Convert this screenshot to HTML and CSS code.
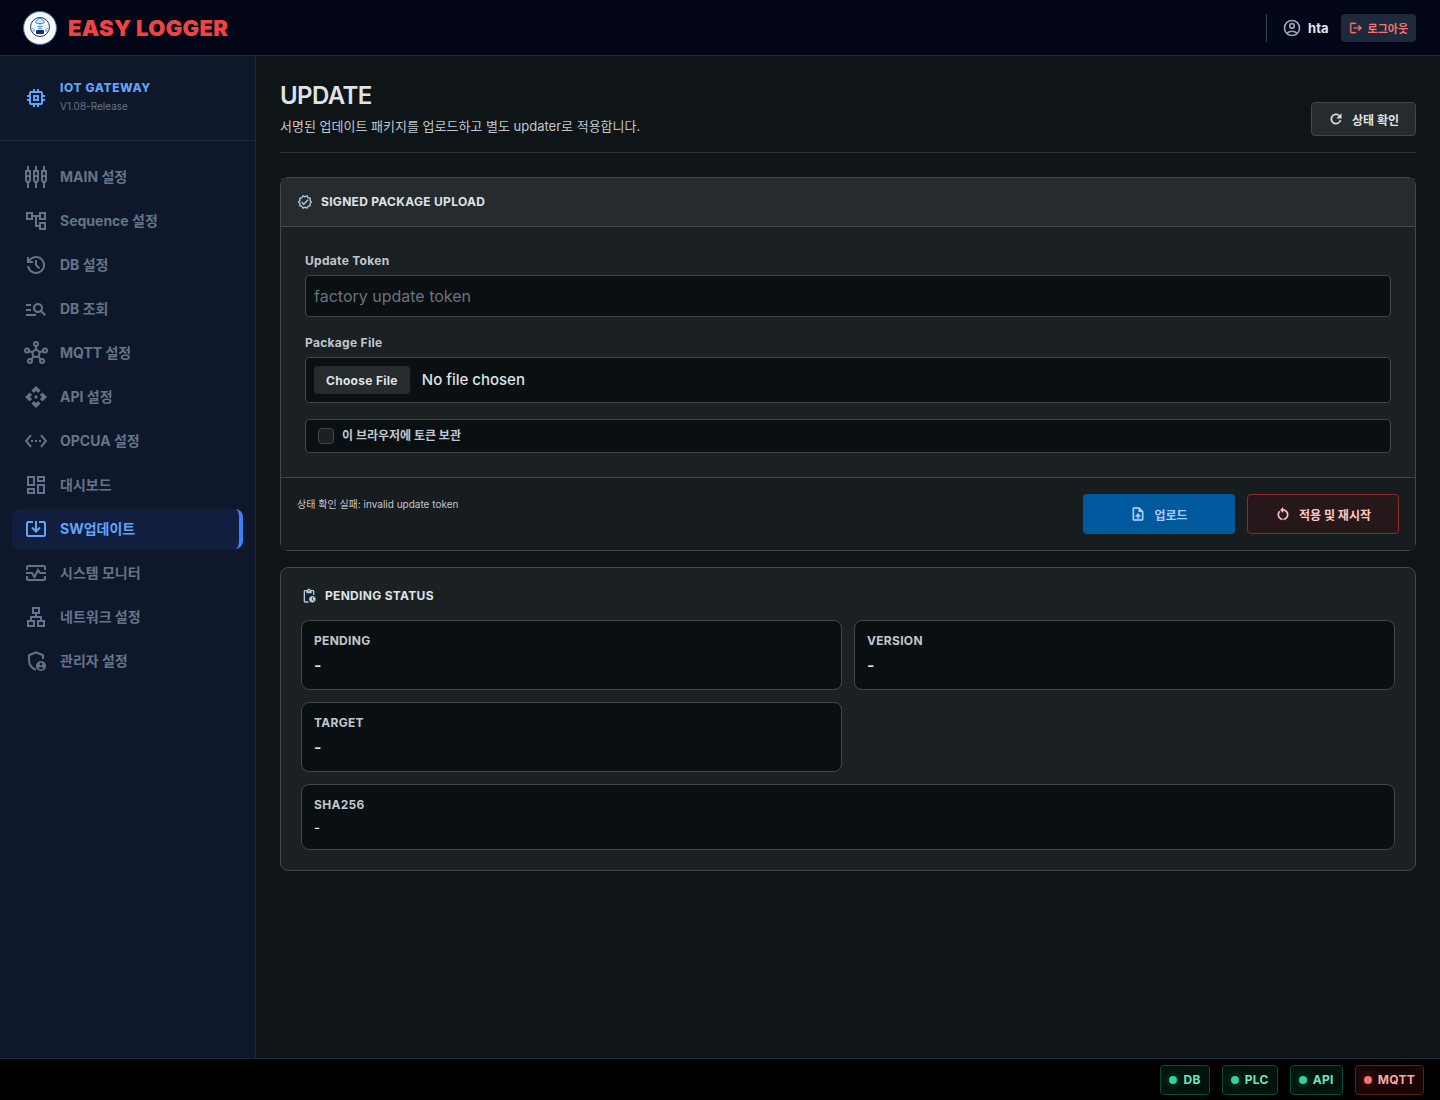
FILE: index.html
```html
<!DOCTYPE html>
<html lang="ko">
<head>
    <meta charset="UTF-8">
    <meta name="viewport" content="width=device-width, initial-scale=1.0">
    <title>EASY LOGGER - UPDATE</title>
    <link rel="stylesheet" href="styles.css">
</head>
<body>

<header class="topbar">
    <div class="brand">
        <svg class="brand-logo" viewBox="0 0 34 34" aria-hidden="true">
            <circle cx="17" cy="17" r="16.5" fill="#f8fafc" stroke="#3b6ea8"/>
            <circle cx="17" cy="16" r="9.5" fill="none" stroke="#1e3a5f"/>
            <path d="M14.5 12.5h5a1.7 1.7 0 0 0 0-3.4 2.6 2.6 0 0 0-5 0 1.7 1.7 0 0 0 0 3.4z" fill="#dbeafe" stroke="#3b82f6"/>
            <path d="M14 15.5h6M15 17.5h4M17 13v6M9 17l3 2M25 17l-3 2M9 20h3M22 20h3" fill="none" stroke="#60a5fa"/>
            <rect x="13" y="19" width="8" height="4" rx="1" fill="#16304f"/>
        </svg>
        <span class="brand-name">EASY LOGGER</span>
    </div>
    <div class="user-area">
        <svg class="icon icon-20 line" viewBox="0 0 24 24"><circle cx="12" cy="12" r="9"/><circle cx="12" cy="9.5" r="2.7"/><path d="M5.8 18.2c3.6-3 8.8-3 12.4 0"/></svg>
        <span class="user-name">hta</span>
        <button type="button" class="logout">
            <svg class="icon icon-14" viewBox="0 0 24 24"><path d="M17 7l-1.41 1.41L18.17 11H8v2h10.17l-2.58 2.58L17 17l5-5zM4 5h8V3H4c-1.1 0-2 .9-2 2v14c0 1.1.9 2 2 2h8v-2H4V5z"/></svg>
            로그아웃
        </button>
    </div>
</header>

<div class="layout">
    <aside class="sidebar">
        <div class="gateway">
            <svg class="icon" viewBox="0 0 24 24"><path d="M9 15V9h6v6zm2-2h2v-2h-2zm-2 8v-2H7q-.825 0-1.412-.587T5 17v-2H3v-2h2v-2H3V9h2V7q0-.825.588-1.412T7 5h2V3h2v2h2V3h2v2h2q.825 0 1.413.588T19 7v2h2v2h-2v2h2v2h-2v2q0 .825-.587 1.413T17 19h-2v2h-2v-2h-2v2zm8-4V7H7v10z"/></svg>
            <div class="gateway-text">
                <div class="gateway-name">IOT GATEWAY</div>
                <div class="gateway-version">V1.08-Release</div>
            </div>
        </div>
        <nav class="menu">
            <a href="#main">
                <svg class="icon line" viewBox="0 0 24 24"><path d="M4 1v5M4 18v5M12 1v5M12 18v5M20 1v5M20 18v5M2 6h4v9l-1 2H3l-1-2zM10 6h4v9l-1 2h-2l-1-2zM18 6h4v9l-1 2h-2l-1-2zM2 11h4M10 11h4M18 11h4"/></svg>
                MAIN 설정
            </a>
            <a href="#sequence">
                <svg class="icon" viewBox="0 0 24 24"><path d="M22 11V3h-7v3H9V3H2v8h7V8h2v10h4v3h7v-8h-7v3h-2V8h2v3h7zM7 9H4V5h3v4zm10 6h3v4h-3v-4zm0-10h3v4h-3V5z"/></svg>
                Sequence 설정
            </a>
            <a href="#db">
                <svg class="icon" viewBox="0 0 24 24"><path d="M12 21q-3.45 0-6.012-2.287T3.05 13H5.1q.35 2.6 2.313 4.3T12 19q2.925 0 4.963-2.037T19 12t-2.037-4.962T12 5q-1.725 0-3.225.8T6.25 8H9v2H3V4h2v2.35q1.275-1.6 3.113-2.475T12 3q1.875 0 3.513.713t2.85 1.924t1.925 2.85T21 12t-.712 3.513t-1.925 2.85t-2.85 1.925T12 21m2.8-4.8L11 12.4V7h2v4.6l3.2 3.2z"/></svg>
                DB 설정
            </a>
            <a href="#db-search">
                <svg class="icon" viewBox="0 0 24 24"><path d="M7 9H2V7h5v2zm0 3H2v2h5v-2zm13.59 7l-3.83-3.83c-.8.52-1.74.83-2.76.83-2.76 0-5-2.24-5-5s2.24-5 5-5 5 2.24 5 5c0 1.02-.31 1.96-.83 2.75L22 17.59 20.59 19zM17 11c0-1.65-1.35-3-3-3s-3 1.35-3 3 1.35 3 3 3 3-1.35 3-3zM2 19h10v-2H2v2z"/></svg>
                DB 조회
            </a>
            <a href="#mqtt">
                <svg class="icon line" viewBox="0 0 24 24"><circle cx="12" cy="12.5" r="3.5"/><circle cx="12" cy="3" r="2"/><circle cx="3" cy="9.5" r="2"/><circle cx="21" cy="9.5" r="2"/><circle cx="6" cy="20" r="2"/><circle cx="18" cy="20" r="2"/><path d="M12 5v4M5 10l3.6 1.4M19 10l-3.6 1.4M7.3 18.3l2.4-3M16.7 18.3l-2.4-3"/></svg>
                MQTT 설정
            </a>
            <a href="#api">
                <svg class="icon" viewBox="0 0 24 24"><path d="M14 12l-2 2-2-2 2-2 2 2zm-2-6l2.12 2.12 2.5-2.5L12 1 7.38 5.62l2.5 2.5L12 6zm-6 6l2.12-2.12-2.5-2.5L1 12l4.62 4.62 2.5-2.5L6 12zm12 0l-2.12 2.12 2.5 2.5L23 12l-4.62-4.62-2.5 2.5L18 12zm-6 6l-2.12-2.12-2.5 2.5L12 23l4.62-4.62-2.5-2.5L12 18z"/></svg>
                API 설정
            </a>
            <a href="#opcua">
                <svg class="icon" viewBox="0 0 24 24"><path d="M7.77 6.76L6.23 5.48.82 12l5.41 6.52 1.54-1.28L3.42 12l4.35-5.24zM7 13h2v-2H7v2zm10-2h-2v2h2v-2zm-6 2h2v-2h-2v2zm6.77-7.52l-1.54 1.28L20.58 12l-4.35 5.24 1.54 1.28L23.18 12l-5.41-6.52z"/></svg>
                OPCUA 설정
            </a>
            <a href="#dashboard">
                <svg class="icon" viewBox="0 0 24 24"><path d="M19 5v2h-4V5h4M9 5v6H5V5h4m10 8v6h-4v-6h4M9 17v2H5v-2h4M21 3h-8v6h8V3zM11 3H3v10h8V3zm10 8h-8v10h8V11zm-10 4H3v6h8v-6z"/></svg>
                대시보드
            </a>
            <a href="#update" class="active">
                <svg class="icon line" viewBox="0 0 24 24"><path d="M9 5H4l-1 1v12l1 1h16l1-1V6l-1-1h-5M12 4v10M8 10.5l4 4 4-4"/></svg>
                SW업데이트
            </a>
            <a href="#monitor">
                <svg class="icon line" viewBox="0 0 24 24"><path d="M3 9V6l1-1h16l1 1v3M3 15v3l1 1h16l1-1v-3M2 12h6l2.5 4 3.5-7 2 3h6"/></svg>
                시스템 모니터
            </a>
            <a href="#network">
                <svg class="icon" viewBox="0 0 24 24"><path d="M13 22h8v-7h-3v-4h-5V9h3V2H8v7h3v2H6v4H3v7h8v-7H8v-2h8v2h-3v7zM10 7V4h4v3h-4zM9 17v3H5v-3h4zm10 0v3h-4v-3h4z"/></svg>
                네트워크 설정
            </a>
            <a href="#admin">
                <svg class="icon" viewBox="0 0 24 24"><path class="outline" d="M19 10V6.2L12 3.4 5 6.2V11c0 4.6 2.8 8.2 6.8 9.8"/><path fill-rule="evenodd" d="M17 12a5 5 0 1 0 0 10 5 5 0 0 0 0-10zm0 1.8a1.4 1.4 0 1 1 0 2.8 1.4 1.4 0 0 1 0-2.8zm0 6.4c-1.1 0-2-.5-2.6-1.3 1.4-1.1 3.8-1.1 5.2 0-.6.8-1.5 1.3-2.6 1.3z"/></svg>
                관리자 설정
            </a>
        </nav>
    </aside>

    <main class="content">
        <div class="page-head">
            <div>
                <h1>UPDATE</h1>
                <p>서명된 업데이트 패키지를 업로드하고 별도 updater로 적용합니다.</p>
            </div>
            <button type="button" class="btn btn-check">
                <svg class="icon icon-16" viewBox="0 0 24 24"><path d="M17.65 6.35C16.2 4.9 14.21 4 12 4c-4.42 0-7.99 3.58-7.99 8s3.57 8 7.99 8c3.73 0 6.84-2.55 7.73-6h-2.08c-.82 2.33-3.04 4-5.65 4-3.31 0-6-2.69-6-6s2.69-6 6-6c1.66 0 3.14.69 4.22 1.78L13 11h7V4l-2.35 2.35z"/></svg>
                상태 확인
            </button>
        </div>

        <form class="card upload-card" id="uploadForm">
            <div class="card-head">
                <svg class="icon icon-16" viewBox="0 0 24 24"><path d="M23 11.99l-2.44-2.79.34-3.69-3.61-.82L15.4 1.5 12 2.96 8.6 1.5 6.71 4.69 3.1 5.5l.34 3.7L1 11.99l2.44 2.79-.34 3.7 3.61.82 1.89 3.2 3.4-1.47 3.4 1.46 1.89-3.19 3.61-.82-.34-3.69L23 11.99zm-3.95 1.48l-.56.65.08.85.18 1.95-1.9.43-.84.19-.44.74-.99 1.68-1.78-.77-.8-.34-.79.34-1.78.77-.99-1.67-.44-.74-.84-.19-1.9-.43.18-1.96.08-.85-.56-.65L3.67 12l1.29-1.48.56-.65-.09-.86-.18-1.94 1.9-.43.84-.19.44-.74.99-1.68 1.78.77.8.34.79-.34 1.78-.77.99 1.68.44.74.84.19 1.9.43-.18 1.95-.08.85.56.65 1.29 1.47-1.28 1.48zM10.09 13.75l-2.32-2.33-1.48 1.49 3.8 3.81 7.34-7.36-1.48-1.49z"/></svg>
                <h2>SIGNED PACKAGE UPLOAD</h2>
            </div>
            <div class="card-body">
                <div class="field">
                    <label for="updateToken">Update Token</label>
                    <input type="text" id="updateToken" placeholder="factory update token">
                </div>
                <div class="field">
                    <label for="packageFile">Package File</label>
                    <input type="file" id="packageFile">
                </div>
                <label class="remember" for="rememberToken">
                    <input type="checkbox" id="rememberToken">
                    이 브라우저에 토큰 보관
                </label>
            </div>
            <div class="card-foot">
                <p id="statusMessage">상태 확인 실패: invalid update token</p>
                <div class="actions">
                    <button type="submit" class="btn btn-upload">
                        <svg class="icon icon-16" viewBox="0 0 24 24"><path d="M14 2H6c-1.1 0-1.99.9-1.99 2L4 20c0 1.1.89 2 1.99 2H18c1.1 0 2-.9 2-2V8l-6-6zm4 18H6V4h7v5h5v11zM8 15.01l1.41 1.41L11 14.84V19h2v-4.16l1.59 1.59L16 15.01 12.01 11 8 15.01z"/></svg>
                        업로드
                    </button>
                    <button type="button" class="btn btn-apply">
                        <svg class="icon icon-16" viewBox="0 0 24 24"><path d="M12 5V2L8 6l4 4V7c3.31 0 6 2.69 6 6 0 2.97-2.17 5.43-5 5.91v2.02c3.95-.49 7-3.85 7-7.93 0-4.42-3.58-8-8-8zm-6 8c0-1.65.67-3.15 1.76-4.24L6.34 7.34C4.9 8.79 4 10.79 4 13c0 4.08 3.05 7.44 7 7.93v-2.02c-2.83-.48-5-2.94-5-5.91z"/></svg>
                        적용 및 재시작
                    </button>
                </div>
            </div>
        </form>

        <section class="card status-card">
            <div class="status-head">
                <svg class="icon icon-16" viewBox="0 0 24 24"><path d="M17 12c-2.76 0-5 2.24-5 5s2.24 5 5 5 5-2.24 5-5-2.24-5-5-5zm1.65 7.35L16.5 17.2V14h1v2.79l1.85 1.85-.7.71zM18 3h-3.18C14.4 1.84 13.3 1 12 1s-2.4.84-2.82 2H6c-1.1 0-2 .9-2 2v15c0 1.1.9 2 2 2h6.11c-.59-.57-1.07-1.25-1.42-2H6V5h2v3h8V5h2v5.08c.71.1 1.38.31 2 .6V5c0-1.1-.9-2-2-2zm-6 2c-.55 0-1-.45-1-1s.45-1 1-1 1 .45 1 1-.45 1-1 1z"/></svg>
                <h2>PENDING STATUS</h2>
            </div>
            <dl class="status-grid">
                <div class="stat"><dt>PENDING</dt><dd>-</dd></div>
                <div class="stat"><dt>VERSION</dt><dd>-</dd></div>
                <div class="stat"><dt>TARGET</dt><dd>-</dd></div>
                <div class="stat stat-wide"><dt>SHA256</dt><dd>-</dd></div>
            </dl>
        </section>
    </main>
</div>

<footer class="statusbar">
    <span class="badge ok">DB</span>
    <span class="badge ok">PLC</span>
    <span class="badge ok">API</span>
    <span class="badge fail">MQTT</span>
</footer>

</body>
</html>
```

FILE: styles.css
```css
* { box-sizing: border-box; margin: 0; padding: 0; }

body {
    min-height: 100vh;
    display: flex;
    flex-direction: column;
    background: #0f1417;
    color: #dfe3e7;
    font-family: Inter, "Noto Sans CJK KR", sans-serif;
    font-size: 14px;
    line-height: 20px;
}
button, input { font-family: inherit; }
button { cursor: pointer; }

.icon { width: 24px; height: 24px; flex: none; fill: currentColor; }
.icon-20 { width: 20px; height: 20px; }
.icon-16 { width: 16px; height: 16px; }
.icon-14 { width: 14px; height: 14px; }
.btn .icon, .logout .icon { stroke: currentColor; stroke-width: 0.5; }
.line, .outline { fill: none; stroke: currentColor; stroke-width: 2; }

/* top bar */
.topbar {
    height: 56px;
    padding: 0 24px;
    display: flex;
    align-items: center;
    justify-content: space-between;
    background: #020617;
    border-bottom: 1px solid #1e293b;
}
.brand { display: flex; align-items: center; gap: 11px; }
.brand-logo { width: 34px; height: 34px; margin-left: -1px; }
.brand-name { color: #ef4444; font-size: 22px; font-weight: 900; line-height: 32px; letter-spacing: 0.015em; }
.user-area {
    display: flex;
    align-items: center;
    height: 28px;
    padding-left: 15px;
    border-left: 1px solid #334155;
    color: #94a3b8;
}
.user-name { margin: 0 12px 0 6px; color: #e2e8f0; font-size: 13px; font-weight: 700; }
.logout {
    display: flex;
    align-items: center;
    gap: 5px;
    height: 28px;
    padding: 0 8px;
    border: 0;
    border-radius: 4px;
    background: #1e293b;
    color: #f87171;
    font-size: 11px;
    font-weight: 700;
}

/* side menu */
.layout { flex: 1; display: flex; }
.sidebar { width: 256px; flex: none; background: #0f172a; border-right: 1px solid #1e293b; }
.gateway {
    display: flex;
    align-items: center;
    gap: 12px;
    height: 85px;
    padding: 0 24px;
    border-bottom: 1px solid #1e293b;
    color: #60a5fa;
}
.gateway-text { padding-bottom: 2px; }
.gateway-name { font-size: 12px; font-weight: 800; line-height: 16px; letter-spacing: 0.05em; }
.gateway-version { margin-top: 3px; color: #64748b; font-size: 10px; line-height: 15px; }
.menu { display: flex; flex-direction: column; gap: 4px; padding: 16px 12px; }
.menu a {
    display: flex;
    align-items: center;
    gap: 12px;
    height: 40px;
    padding: 0 12px;
    border-radius: 8px;
    color: #64748b;
    font-weight: 700;
    text-decoration: none;
}
.menu a:hover { color: #94a3b8; }
.menu a.active { background: #111e40; color: #60a5fa; border-right: 4px solid #3b82f6; }

/* page */
.content { flex: 1; min-width: 0; padding: 24px; }
.page-head {
    display: flex;
    align-items: flex-end;
    justify-content: space-between;
    padding-bottom: 16px;
    margin-bottom: 24px;
    border-bottom: 1px solid #2d3236;
}
h1 { font-size: 24px; font-weight: 600; line-height: 32px; letter-spacing: -0.025em; }
.page-head p { margin-top: 4px; color: #c1c7d0; font-size: 13px; }
h2 { font-size: 12px; font-weight: 700; line-height: 16px; letter-spacing: 0.025em; }

.btn {
    display: flex;
    align-items: center;
    justify-content: center;
    gap: 8px;
    border: 1px solid transparent;
    border-radius: 4px;
    font-size: 12px;
    font-weight: 700;
}
.btn-check { height: 34px; padding: 0 16px; background: #262b2e; border-color: #41474d; color: #dfe3e7; }
.btn-upload { width: 152px; height: 40px; background: #00599c; color: #a9ceff; }
.btn-apply { width: 152px; height: 40px; background: #26171a; border-color: #8e2a2e; color: #ffc9c5; }

.card { border: 1px solid #41474d; border-radius: 8px; background: #1b2023; }
.card-head, .status-head { display: flex; align-items: center; gap: 8px; }
.card-head .icon, .status-head .icon { color: #b4cbe8; }
.card-head { padding: 16px; background: #262b2e; border-bottom: 1px solid #41474d; }
.upload-card { margin-bottom: 16px; }
.card-body { display: flex; flex-direction: column; gap: 16px; padding: 24px; }
.field label { display: block; margin-bottom: 4px; color: #c1c7d0; font-size: 12px; font-weight: 700; letter-spacing: 0.025em; }
.field input {
    display: block;
    width: 100%;
    padding: 8px;
    border: 1px solid #41474d;
    border-radius: 4px;
    background: #0a0f12;
    color: #dfe3e7;
    font-size: 16px;
    line-height: 24px;
}
.field input[type="text"] { height: 42px; }
.field input[type="file"] { height: 46px; font-size: 15px; font-weight: 500; }
.field input::placeholder { color: #6b7280; }
.field input::file-selector-button {
    height: 28px;
    padding: 0 12px;
    margin-right: 12px;
    border: 0;
    border-radius: 4px;
    background: #262b2e;
    color: #dfe3e7;
    font-family: inherit;
    font-size: 12px;
    font-weight: 700;
    letter-spacing: 0.025em;
}
.remember {
    display: flex;
    align-items: center;
    gap: 8px;
    height: 34px;
    padding: 0 12px;
    border: 1px solid #41474d;
    border-radius: 4px;
    background: #0a0f12;
    color: #c1c7d0;
    font-size: 12px;
    font-weight: 700;
}
.remember input {
    appearance: none;
    width: 16px;
    height: 16px;
    border: 1px solid #41474d;
    border-radius: 4px;
    background: #1b2023;
}
.remember input:checked { background: #3b82f6; }
.card-foot {
    display: flex;
    justify-content: space-between;
    padding: 16px;
    border-top: 1px solid #41474d;
    background: #171c1f;
}
.card-foot p { color: #c1c7d0; font-size: 10px; }
.actions { display: flex; gap: 12px; }

.status-card { padding: 20px; }
.status-head { margin-bottom: 16px; }
.status-grid { display: grid; grid-template-columns: 1fr 1fr; gap: 12px; }
.stat { padding: 12px; border: 1px solid #41474d; border-radius: 8px; background: #0a0f12; }
.stat-wide { grid-column: 1 / -1; }
.stat dt { margin-bottom: 4px; color: #c1c7d0; font-size: 12px; font-weight: 700; line-height: 16px; letter-spacing: 0.025em; }
.stat dd { font-size: 16px; font-weight: 600; line-height: 24px; }
.stat-wide dd { font-size: 13px; font-weight: 500; line-height: 20px; }

/* connection states */
.statusbar {
    display: flex;
    align-items: center;
    justify-content: flex-end;
    gap: 12px;
    height: 42px;
    padding: 0 16px;
    background: #000;
    border-top: 1px solid #1e293b;
}
.badge {
    display: flex;
    align-items: center;
    gap: 6px;
    height: 30px;
    padding: 0 8px;
    border: 1px solid;
    border-radius: 4px;
    font-size: 12px;
    font-weight: 700;
    letter-spacing: 0.025em;
}
.badge::before { content: ""; width: 8px; height: 8px; border-radius: 50%; }
.ok { background: #02130e; border-color: #064e3b; color: #6ee7b7; }
.ok::before { background: #34d399; box-shadow: 0 0 8px #10b98180; }
.fail { background: #180606; border-color: #641c1c; color: #fca5a5; }
.fail::before { background: #f87171; box-shadow: 0 0 8px #ef444480; }
```
